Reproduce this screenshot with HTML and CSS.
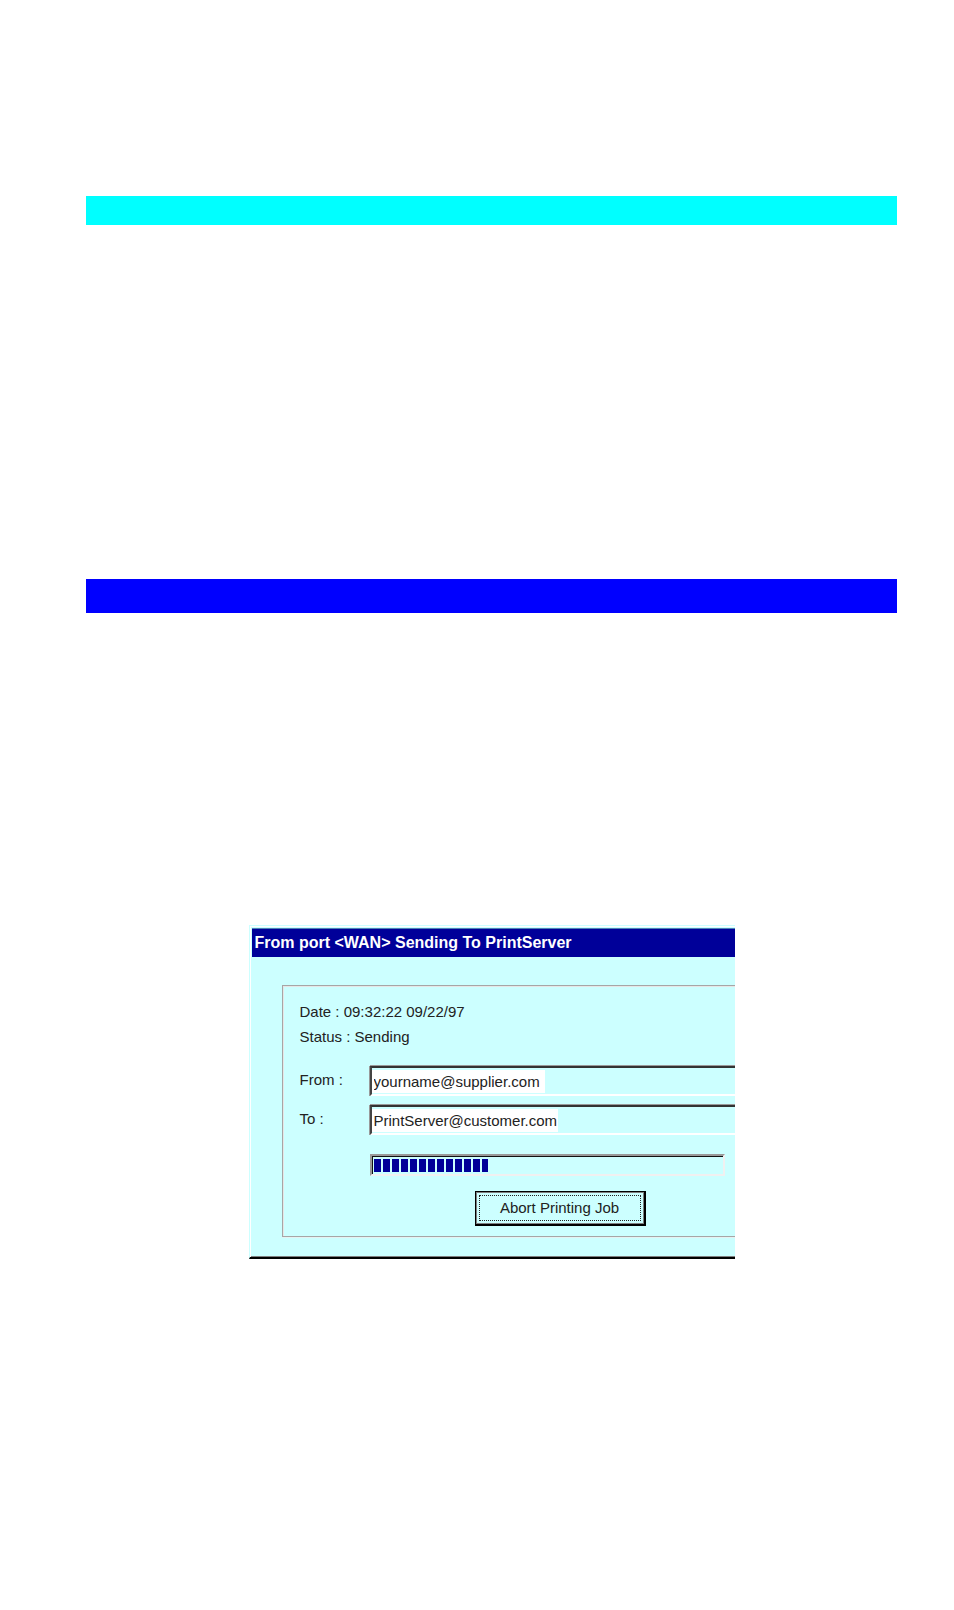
FILE: index.html
```html
<!DOCTYPE html>
<html lang="en">
<head>
    <meta charset="UTF-8">
    <meta name="viewport" content="width=device-width, initial-scale=1.0">
    <title>Print Job</title>
    <link rel="stylesheet" href="styles.css">
</head>
<body>
    <div class="bar bar-cyan"></div>
    <div class="bar bar-blue"></div>

    <main class="dialog">
        <h1>From port &lt;WAN&gt; Sending To PrintServer</h1>

        <form class="group">
            <p>Date : 09:32:22 09/22/97</p>
            <p>Status : Sending</p>

            <div class="row row-from">
                <label for="from">From :</label>
                <div class="field">
                    <input class="from-input" type="text" id="from" value="yourname@supplier.com">
                </div>
            </div>
            <div class="row">
                <label for="to">To :</label>
                <div class="field">
                    <input class="to-input" type="text" id="to" value="PrintServer@customer.com">
                </div>
            </div>

            <div class="progress" role="progressbar" aria-label="Sending" aria-valuemin="0" aria-valuemax="100" aria-valuenow="33">
                <div class="progress-fill"></div>
            </div>

            <button type="button" class="abort-btn"><span>Abort Printing Job</span></button>
        </form>
    </main>
</body>
</html>
```
FILE: styles.css
```css
* {
    box-sizing: border-box;
}
body {
    margin: 0;
    padding: 196px 57px 80px 86px;
    background: white;
    color: #222;
    font-family: "Liberation Sans", Arial, sans-serif;
    font-size: 15px;
}
.bar-cyan {
    height: 29px;
    background: #00ffff;
}
.bar-blue {
    height: 34px;
    margin-top: 354px;
    background: #0000ff;
}
.dialog {
    max-width: 486px;
    margin: 312px auto 0;
    background: #ccffff;
    border-top: 1px solid #ccffff;
    border-left: 1px solid #ccffff;
    border-bottom: 2px solid black;
    box-shadow: inset 1px 1px white, inset 0 -1px #808080;
    padding: 2px 0 20px 2px;
}
h1 {
    margin: 0;
    padding-left: 3px;
    background: #000099;
    border-top: 1px solid #4d80b3;
    color: white;
    font-size: 16px;
    line-height: 28px;
    white-space: nowrap;
    overflow: hidden;
}
.group {
    margin: 28px 0 0 30px;
    padding: 13px 0 10px 17px;
    border: 1px solid #a6a6a6;
    border-right: none;
    box-shadow: inset 1px 1px #e6e6e6, 0 1px #e6f2f2;
}
.group p {
    margin: 0;
    line-height: 25px;
}
.row {
    display: flex;
    margin-bottom: 9px;
}
.row-from {
    margin-top: 17px;
}
.row label {
    width: 70px;
    line-height: 27px;
}
.field {
    flex: 1;
    height: 30px;
    border-top: 2px solid #333;
    border-left: 2px solid #444;
    border-bottom: 2px solid white;
    box-shadow: 0 -1px #999, -1px 0 #999;
    padding: 2px 0;
}
.field input {
    display: block;
    height: 23px;
    padding: 0 0 0 2px;
    border: none;
    outline: none;
    background: white;
    color: #222;
    font: inherit;
}
.from-input {
    width: 173px;
}
.to-input {
    width: 186px;
}
.progress {
    height: 22px;
    margin: 19px 10px 0 70px;
    border: 2px solid #999;
    border-right-color: #f0f0f0;
    border-bottom-color: #f0f0f0;
    box-shadow: inset 1px 1px #111;
    padding: 3px 2px 2px;
}
.progress-fill {
    width: 33%;
    height: 13px;
    background: repeating-linear-gradient(to right, #000099 0 7px, #ccffff 7px 9px);
}
.abort-btn {
    display: block;
    width: 171px;
    height: 35px;
    margin: 15px 0 0 175px;
    padding: 2px;
    border: 2px solid black;
    border-width: 1px 2px 2px 1px;
    background: #ccffff;
    box-shadow: inset 1px 1px #808080, inset -1px -1px #808080;
    color: #222;
    font: inherit;
}
.abort-btn span {
    display: block;
    margin: 1px;
    border: 1px dotted #222;
    line-height: 24px;
}
```
